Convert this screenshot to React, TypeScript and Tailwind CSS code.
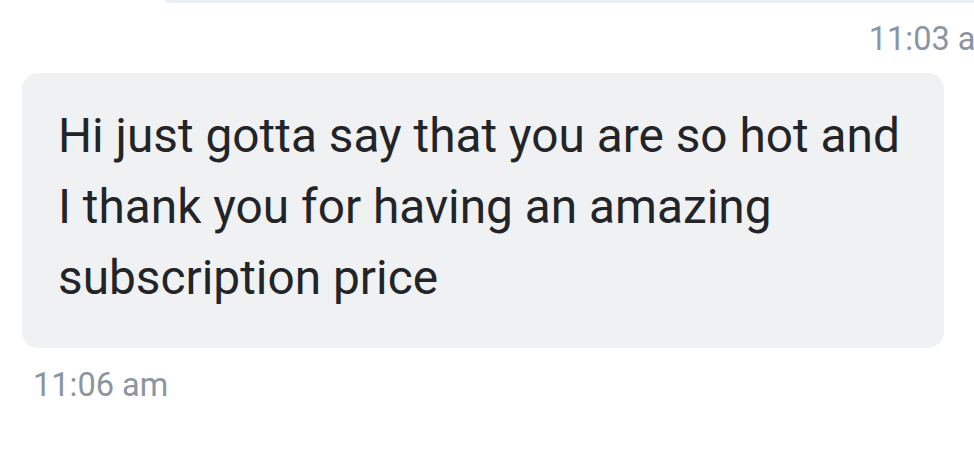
export default function App() {
  return (
    <main
      className="h-[449px] w-[974px] overflow-hidden bg-white"
      style={{ fontFamily: 'Roboto, "Noto Sans", sans-serif' }}
    >
      <div className="ml-[165px] h-[3px] rounded-bl-[12px] bg-[#e9f1f3]" />

      <div className="-mr-[30px] mt-[16px] flex justify-end">
        <span className="text-[32.5px] leading-[40px] text-[#8b95a1]">11:03 am</span>
      </div>

      <div className="ml-[22px] mt-[14px] w-[922px] rounded-[16px] bg-[#f0f1f3] pb-[34px] pl-[36px] pr-[36px] pt-[28px]">
        <p className="text-[47.8px] leading-[71px] text-[#232427]">
          Hi just gotta say that you are so hot and I thank you for having an amazing subscription price
        </p>
      </div>

      <div className="ml-[33px] mt-[17px] text-[32.5px] leading-[40px] text-[#8b95a1]">11:06 am</div>
    </main>
  );
}
